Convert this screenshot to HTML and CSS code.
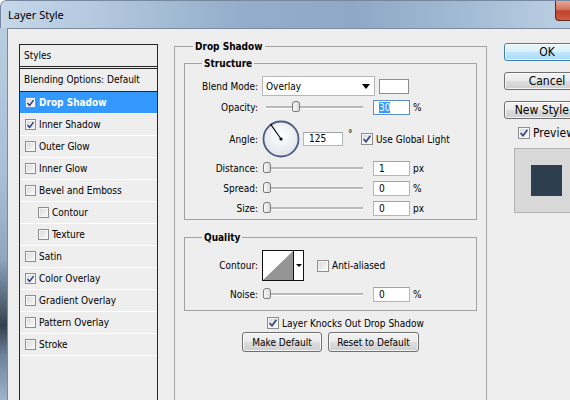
FILE: index.html
```html
<!DOCTYPE html>
<html>
<head>
<meta charset="utf-8">
<title>Layer Style</title>
<link rel="stylesheet" href="styles.css">
</head>
<body>
<div class="window">
  <div class="titlebar">
    <span class="title">Layer Style</span>
    <span class="close"></span>
  </div>
  <div class="frame">
    <div class="edge"></div>
    <div class="client">
      <div class="styles-panel">
        <div class="sp-head">Styles</div>
        <div class="sp-blend">Blending Options: Default</div>
        <div class="sp-row selected"><span class="cb"><svg viewBox="0 0 10 10"><path d="M1.6 5 L4 7.8 L8.4 1.8"/></svg></span>Drop Shadow</div>
        <div class="sp-row"><span class="cb"><svg viewBox="0 0 10 10"><path d="M1.6 5 L4 7.8 L8.4 1.8"/></svg></span>Inner Shadow</div>
        <div class="sp-row"><span class="cb"></span>Outer Glow</div>
        <div class="sp-row"><span class="cb"></span>Inner Glow</div>
        <div class="sp-row"><span class="cb"></span>Bevel and Emboss</div>
        <div class="sp-row sub"><span class="cb"></span>Contour</div>
        <div class="sp-row sub"><span class="cb"></span>Texture</div>
        <div class="sp-row"><span class="cb"></span>Satin</div>
        <div class="sp-row"><span class="cb"><svg viewBox="0 0 10 10"><path d="M1.6 5 L4 7.8 L8.4 1.8"/></svg></span>Color Overlay</div>
        <div class="sp-row"><span class="cb"></span>Gradient Overlay</div>
        <div class="sp-row"><span class="cb"></span>Pattern Overlay</div>
        <div class="sp-row"><span class="cb"></span>Stroke</div>
      </div>

      <div class="main">
        <div class="group outer">
          <div class="gtitle gt-outer">Drop Shadow</div>

          <div class="group inner structure">
            <div class="gtitle gt-inner">Structure</div>
            <div class="row r-blend">
              <span class="lbl">Blend Mode:</span>
              <div class="select"><span>Overlay</span><span class="arrow"></span></div>
              <div class="swatch"></div>
            </div>
            <div class="row r-slider r-opacity">
              <span class="lbl">Opacity:</span>
              <div class="slider"><span class="track"></span><span class="thumb" style="left:29.6px"></span></div>
              <div class="num focus"><span class="sel">30</span></div>
              <span class="unit">%</span>
            </div>
            <div class="row r-angle">
              <span class="lbl">Angle:</span>
              <svg class="dial" viewBox="0 0 38 38">
                <defs>
                  <radialGradient id="dg" cx="50%" cy="40%" r="60%">
                    <stop offset="0" stop-color="#ffffff"/>
                    <stop offset="1" stop-color="#e2e4ea"/>
                  </radialGradient>
                </defs>
                <circle cx="19" cy="19" r="17.5" fill="url(#dg)" stroke="#4c5c86" stroke-width="1.8"/>
                <line x1="19" y1="19" x2="8.4" y2="3.9" stroke="#000" stroke-width="1.1"/>
                <circle cx="19" cy="19" r="1.6" fill="#000"/>
              </svg>
              <div class="num angle">125</div>
              <span class="deg">°</span>
              <span class="cb"><svg viewBox="0 0 10 10"><path d="M1.6 5 L4 7.8 L8.4 1.8"/></svg></span>
              <span class="cb-text">Use Global Light</span>
            </div>
            <div class="row r-slider r-distance">
              <span class="lbl">Distance:</span>
              <div class="slider"><span class="track"></span><span class="thumb" style="left:1px"></span></div>
              <div class="num">1</div>
              <span class="unit">px</span>
            </div>
            <div class="row r-slider r-spread">
              <span class="lbl">Spread:</span>
              <div class="slider"><span class="track"></span><span class="thumb" style="left:1px"></span></div>
              <div class="num">0</div>
              <span class="unit">%</span>
            </div>
            <div class="row r-slider r-size">
              <span class="lbl">Size:</span>
              <div class="slider"><span class="track"></span><span class="thumb" style="left:1px"></span></div>
              <div class="num">0</div>
              <span class="unit">px</span>
            </div>
          </div>

          <div class="group inner quality">
            <div class="gtitle gt-inner">Quality</div>
            <div class="row r-contour">
              <span class="lbl">Contour:</span>
              <div class="contour">
                <svg class="ct-thumb" viewBox="0 0 30 29" preserveAspectRatio="none">
                  <rect width="30" height="29" fill="#fff"/>
                  <polygon points="0,29 30,0 30,29" fill="#959595"/>
                </svg>
                <span class="ct-arrow"><span class="arrow small"></span></span>
              </div>
              <span class="cb aa"></span>
              <span class="cb-text">Anti-aliased</span>
            </div>
            <div class="row r-slider r-noise">
              <span class="lbl">Noise:</span>
              <div class="slider"><span class="track"></span><span class="thumb" style="left:1px"></span></div>
              <div class="num">0</div>
              <span class="unit">%</span>
            </div>
          </div>

          <div class="row r-knock">
            <span class="cb"><svg viewBox="0 0 10 10"><path d="M1.6 5 L4 7.8 L8.4 1.8"/></svg></span>
            <span class="cb-text">Layer Knocks Out Drop Shadow</span>
          </div>
          <div class="row r-buttons">
            <div class="btn b-make">Make Default</div>
            <div class="btn b-reset">Reset to Default</div>
          </div>
        </div>
      </div>

      <div class="side">
        <div class="btn big default">OK</div>
        <div class="btn big">Cancel</div>
        <div class="btn big">New Style...</div>
        <div class="row r-preview">
          <span class="cb"><svg viewBox="0 0 10 10"><path d="M1.6 5 L4 7.8 L8.4 1.8"/></svg></span>
          <span class="cb-text">Preview</span>
        </div>
        <div class="preview"><div class="pv-square"></div></div>
      </div>
    </div>
  </div>
</div>
</body>
</html>
```

FILE: styles.css
```css
* { box-sizing: border-box; }
html, body { margin: 0; padding: 0; }
body {
  width: 570px;
  height: 400px;
  overflow: hidden;
  background: #ffffff;
  font-family: "DejaVu Sans Condensed", "Liberation Sans", sans-serif;
  font-size: 10px;
  color: #000;
}

.window {
  width: 570px;
  height: 400px;
  display: flex;
  flex-direction: column;
  border-top-left-radius: 6px;
  overflow: hidden;
}

.titlebar {
  height: 28px;
  flex: none;
  display: flex;
  align-items: flex-start;
  justify-content: space-between;
  background: linear-gradient(90deg, #c6d7e9 0%, #b2c7dd 18%, #94adca 42%, #8ea8c6 62%, #a3bbd4 82%, #bcd0e3 100%);
  border-top: 1px solid #75889d;
  border-left: 1px solid #75889d;
  border-top-left-radius: 6px;
}
.title {
  font-family: "Noto Sans", "Open Sans", sans-serif;
  font-size: 11px;
  line-height: 14px;
  padding: 7px 0 0 7px;
  color: #000;
}
.close {
  width: 15px;
  height: 20px;
  background: linear-gradient(#e9a897 0%, #d77561 42%, #c2432c 55%, #cf5b43 100%);
  border: 1px solid #5e2b22;
  border-top: none;
  border-right: none;
  border-bottom-left-radius: 4px;
}

.frame {
  flex: 1;
  display: flex;
  min-height: 0;
}
.edge {
  width: 7px;
  flex: none;
  background: linear-gradient(#bacde2 0%, #a9bfd6 40%, #8ea6c0 62%, #34404e 80%, #6c829a 88%, #9fb4ca 100%);
}
.client {
  flex: 1;
  background: #eeeeee;
  border-top: 1px solid #7a8a9d;
  border-left: 1px solid #7a8a9d;
  display: flex;
  align-items: flex-start;
  padding: 15px 0 0 11px;
  overflow: hidden;
}

/* checkbox */
.cb {
  width: 12px;
  height: 12px;
  flex: none;
  display: inline-flex;
  align-items: center;
  justify-content: center;
  border: 1px solid #8c8d8e;
  background: linear-gradient(135deg, #d6d6d6 0%, #f2f2f2 70%, #fbfbfb 100%);
  box-shadow: inset 0 0 0 1px #f7f7f7;
}
.cb svg { width: 10px; height: 10px; }
.cb path { fill: none; stroke: #34448b; stroke-width: 1.7; stroke-linejoin: round; }

/* styles panel */
.styles-panel {
  width: 139px;
  height: 372px;
  flex: none;
  border: 1px solid #262626;
}
.sp-head {
  height: 24px;
  line-height: 21px;
  padding-left: 4px;
  border-bottom: 3px double #262626;
}
.sp-blend {
  height: 23px;
  line-height: 21px;
  padding-left: 4px;
  border-bottom: 1px solid #262626;
}
.sp-row {
  height: 22px;
  display: flex;
  align-items: center;
  padding-left: 5px;
  border-bottom: 1px solid #ffffff;
}
.sp-row .cb { width: 11px; height: 11px; margin-right: 3px; }
.sp-row.sub { padding-left: 18px; }
.sp-row.selected {
  background: #3399ff;
  color: #ffffff;
  font-weight: bold;
}

/* main area */
.main {
  width: 313px;
  flex: none;
  margin-left: 16px;
  margin-top: 2px;
}
.group {
  border: 1px solid #a3a3a3;
}
.group.outer {
  height: 370px;
  padding: 0 9px;
}
.gtitle {
  display: table;
  font-weight: bold;
  line-height: 13px;
  padding: 0 2px;
  background: #eeeeee;
  margin-top: -7px;
}
.gt-outer { margin-left: 9px; }
.gt-inner { margin-left: 17px; }

.group.inner.structure { margin-top: 10px; padding-bottom: 3px; }
.group.inner.quality { margin-top: 17px; padding-bottom: 8px; }

.row {
  display: flex;
  align-items: center;
}
.lbl {
  width: 73px;
  flex: none;
  text-align: right;
  margin-right: 4px;
}

.r-blend { margin-top: 6px; height: 20px; }
.select {
  width: 113px;
  height: 20px;
  background: #fff;
  border: 1px solid #b4b6b9;
  display: flex;
  align-items: center;
  justify-content: space-between;
  padding: 0 4px 0 3px;
}
.arrow {
  width: 0;
  height: 0;
  border-left: 4px solid transparent;
  border-right: 4px solid transparent;
  border-top: 5px solid #000;
}
.arrow.small {
  border-left-width: 3px;
  border-right-width: 3px;
  border-top-width: 3px;
}
.swatch {
  width: 30px;
  height: 15px;
  margin-left: 4px;
  background: #fff;
  border: 1px solid #8d8d8d;
}

.r-slider { height: 16px; }
.r-opacity { margin-top: 3px; }
.r-distance { margin-top: 2px; }
.r-spread, .r-size { margin-top: 4px; }
.r-noise { margin-top: 5px; }

.slider {
  width: 107px;
  height: 16px;
  flex: none;
  position: relative;
}
.track {
  position: absolute;
  left: 4px;
  top: 7px;
  width: 97px;
  height: 2px;
  background: #b9b9b9;
  border-bottom: 1px solid #ffffff;
  box-sizing: content-box;
}
.thumb {
  position: absolute;
  top: 2px;
  width: 8px;
  height: 11px;
  border: 1px solid #7b7b7b;
  border-radius: 3px 3px 2px 2px;
  background: linear-gradient(90deg, #f7f7f7, #dcdcdc);
}

.num {
  width: 37px;
  height: 15px;
  flex: none;
  margin-left: 4px;
  background: #fff;
  border: 1px solid #b2b5ba;
  border-top-color: #a0a3a8;
  padding-left: 5px;
  line-height: 13px;
}
.num.focus { border-color: #5b8fc4; }
.sel { background: #3399ff; color: #fff; }
.unit { margin-left: 3px; }

.r-angle { margin-top: 5px; height: 38px; }
.dial { width: 38px; height: 38px; flex: none; }
.num.angle { width: 40px; height: 14px; margin-left: 3px; line-height: 12px; }
.deg { align-self: flex-start; margin: 9px 0 0 5px; width: 8px; line-height: 10px; }
.r-angle .cb { margin-left: 5px; }
.cb-text { margin-left: 3px; white-space: nowrap; }

.r-contour { margin-top: 6px; height: 31px; }
.contour {
  width: 42px;
  height: 31px;
  flex: none;
  border: 1px solid #111;
  display: flex;
  background: #fff;
}
.ct-thumb { width: 30px; height: 29px; display: block; }
.ct-arrow {
  flex: 1;
  border-left: 1px solid #111;
  display: flex;
  align-items: center;
  justify-content: center;
  background: #fff;
}
.cb.aa { margin-left: 13px; }

.r-knock { margin-top: 5px; height: 14px; padding-left: 83px; }
.r-buttons { margin-top: 2px; padding-left: 58px; gap: 6px; }

.btn {
  height: 20px;
  display: flex;
  align-items: center;
  justify-content: center;
  border: 1px solid #707070;
  border-radius: 3px;
  background: linear-gradient(#f2f2f2 0%, #ebebeb 48%, #dddddd 52%, #cfcfcf 100%);
  box-shadow: inset 0 0 0 1px rgba(255, 255, 255, 0.75);
  white-space: nowrap;
}
.b-make { width: 80px; }
.b-reset { width: 91px; }

/* side */
.side {
  width: 86px;
  flex: none;
  margin-left: 17px;
  margin-top: -1px;
  font-size: 12px;
}
.btn.big { height: 18px; margin-bottom: 11px; }
.btn.default {
  border-color: #3c7fb1;
  background: linear-gradient(#eaf6fd 0%, #d9f0fc 48%, #bee6fd 52%, #a7d9f5 100%);
}
.r-preview { margin-top: -3px; padding-left: 14px; height: 12px; }
.preview {
  width: 65px;
  height: 65px;
  margin: 9px 0 0 10px;
  background: #d8d8d8;
  border: 1px solid #b3b3b3;
  display: flex;
  align-items: center;
  justify-content: center;
}
.pv-square {
  width: 31px;
  height: 31px;
  background: #2e3e4e;
}
```
